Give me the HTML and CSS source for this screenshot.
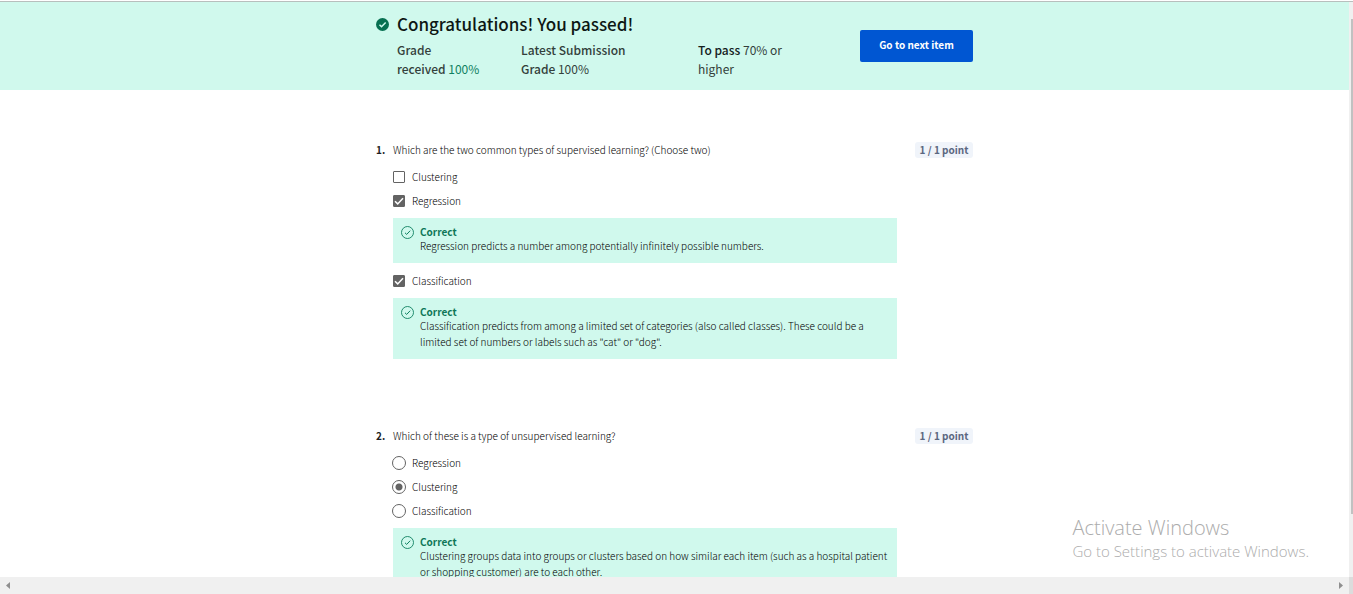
FILE: index.html
```html
<!DOCTYPE html>
<html lang="en">
<head>
<meta charset="utf-8">
<meta name="viewport" content="width=device-width, initial-scale=1">
<title>Practice quiz results</title>
<link rel="stylesheet" href="styles.css">
</head>
<body>
<svg class="sprite" aria-hidden="true">
  <symbol id="correct" viewBox="0 0 13 13"><circle cx="6.5" cy="6.5" r="6" fill="none" stroke="currentColor" stroke-width="0.9"/><path d="M4 6.8 5.7 8.4 9.2 4.7" fill="none" stroke="currentColor" stroke-width="1"/></symbol>
</svg>
<div class="viewport">
  <div class="page">
    <header class="banner">
      <div class="banner-inner">
        <svg class="passed-icon" viewBox="0 0 12 12" aria-hidden="true"><circle cx="6" cy="6" r="6" fill="#087051"/><path d="M3.2 6.2 5.1 8 8.9 4.2" fill="none" stroke="#d0f9ed" stroke-width="1.4"/></svg>
        <div class="result">
          <h1>Congratulations! You passed!</h1>
          <div class="stats">
            <p><strong>Grade<br>received</strong> <span class="grade">100%</span></p>
            <p><strong>Latest Submission<br>Grade</strong> 100%</p>
            <p><strong class="dark">To pass</strong> 70% or<br>higher</p>
          </div>
        </div>
        <button class="next" type="button">Go to next item</button>
      </div>
    </header>
    <main class="quiz">
      <section class="question">
        <span class="number">1.</span>
        <div class="body">
          <p class="prompt">Which are the two common types of supervised learning? (Choose two)</p>
          <label class="option"><input type="checkbox">Clustering</label>
          <label class="option"><input type="checkbox" checked>Regression</label>
          <div class="feedback">
            <svg aria-hidden="true"><use href="#correct"/></svg>
            <div><h2>Correct</h2><p>Regression predicts a number among potentially infinitely possible numbers.</p></div>
          </div>
          <label class="option"><input type="checkbox" checked>Classification</label>
          <div class="feedback">
            <svg aria-hidden="true"><use href="#correct"/></svg>
            <div><h2>Correct</h2><p>Classification predicts from among a limited set of categories (also called classes). These could be a limited set of numbers or labels such as "cat" or "dog".</p></div>
          </div>
        </div>
        <span class="points">1 / 1 point</span>
      </section>
      <section class="question">
        <span class="number">2.</span>
        <div class="body">
          <p class="prompt">Which of these is a type of unsupervised learning?</p>
          <label class="option"><input type="radio" name="q2">Regression</label>
          <label class="option"><input type="radio" name="q2" checked>Clustering</label>
          <label class="option"><input type="radio" name="q2">Classification</label>
          <div class="feedback">
            <svg aria-hidden="true"><use href="#correct"/></svg>
            <div><h2>Correct</h2><p>Clustering groups data into groups or clusters based on how similar each item (such as a hospital patient or shopping customer) are to each other.</p></div>
          </div>
        </div>
        <span class="points">1 / 1 point</span>
      </section>
    </main>
  </div>
  <div class="vbar"><div class="thumb"></div></div>
  <div class="hbar">
    <svg viewBox="0 0 4 7" aria-hidden="true"><path d="M4 0v7L0 3.5z"/></svg>
    <svg viewBox="0 0 4 7" aria-hidden="true"><path d="M0 0v7l4-3.500z"/></svg>
  </div>
  <div class="corner"></div>
</div>
<aside class="activation">
  <p class="activation-title">Activate Windows</p>
  <p>Go to Settings to activate Windows.</p>
</aside>
</body>
</html>
```
FILE: styles.css
```css
* { box-sizing: border-box; }
body, h1, h2, p { margin: 0; }
body {
  position: relative;
  background: #fff;
  color: #000;
  font: 300 10px/16px "Noto Sans CJK SC", "Open Sans", sans-serif;
}
.sprite { position: absolute; width: 0; height: 0; }

.viewport {
  display: grid;
  grid-template: minmax(0, 1fr) 17px / minmax(0, 1fr) 4px;
  height: 100vh;
  padding-top: 1px;
  overflow: hidden;
}
.viewport > * { min-height: 0; }
.page { overflow: hidden; border-top: 1px solid #b8bfbd; }

.banner { background: #d0f9ed; padding: 11px 16px 12px; }
.banner-inner {
  display: grid;
  grid-template-columns: 13px 1fr 113px;
  column-gap: 8px;
  max-width: 597px;
  margin: 0 auto;
}
.passed-icon { width: 13px; height: 13px; margin-top: 5px; }
h1 { font-size: 17px; line-height: 22px; font-weight: 500; color: #0d1714; margin-bottom: 5px; }
.stats {
  display: grid;
  grid-template-columns: 124px 177px 1fr;
  font-size: 12px;
  line-height: 19px;
  font-weight: 400;
  color: #333f3b;
}
.stats strong { font-weight: 500; }
.stats .dark { color: #14201c; }
.stats .grade { color: #0f8060; }
.next {
  align-self: start;
  height: 32px;
  margin-top: 17px;
  padding: 0 0 2px;
  border: 0;
  border-radius: 2px;
  background: #0056d2;
  color: #fff;
  font: 700 10px/16px "Noto Sans CJK SC", "Open Sans", sans-serif;
}

.quiz {
  display: grid;
  gap: 63px;
  max-width: 597px;
  margin: 0 auto;
  padding-top: 52px;
}
.question {
  display: grid;
  grid-template-columns: 17px minmax(0, 1fr) 58px;
  align-items: start;
}
.number { font-weight: 700; color: #1f1f1f; }
.body { padding-right: 18px; }
.prompt { margin-bottom: 7px; }
.option { display: flex; align-items: center; gap: 6px; height: 24px; }
.option input {
  appearance: none;
  flex: none;
  margin: 0;
  border: 1px solid #636363;
}
.option input[type="checkbox"] {
  width: 12px;
  height: 12px;
  margin-right: 1px;
  border-radius: 1px;
}
.option input[type="checkbox"]:checked {
  background: #636363 url("data:image/svg+xml,%3Csvg xmlns='http://www.w3.org/2000/svg' viewBox='0 0 10 10'%3E%3Cpath d='M1 5.200 3.700 7.900 9 2.300' fill='none' stroke='white' stroke-width='1.500'/%3E%3C/svg%3E") center / 10px 10px no-repeat;
}
.option input[type="radio"] {
  width: 14px;
  height: 14px;
  margin-left: -1px;
  border-radius: 50%;
}
.option input[type="radio"]:checked {
  background: radial-gradient(circle, #636363 3px, transparent 4px);
}
.feedback {
  display: grid;
  grid-template-columns: 13px 1fr;
  column-gap: 6px;
  margin: 5px 0 6px;
  padding: 8px 2px 9px 8px;
  background: #d0f9ed;
}
.feedback svg { width: 13px; height: 13px; color: #0f8060; }
.feedback h2 { font-size: 10px; line-height: 12px; font-weight: 700; color: #0f7758; }
.points {
  border-radius: 3px;
  background: #f0f4fa;
  color: #5b6780;
  font-weight: 700;
  text-align: center;
}

.vbar { padding: 17px 0 63px 2px; background: #f0f0f0; border-top: 1px solid #b8bfbd; }
.thumb { height: 100%; background: #c1c1c1; }
.hbar {
  display: flex;
  align-items: center;
  justify-content: space-between;
  padding: 0 6px;
  background: #f0f0f0;
  fill: #8f8f8f;
}
.hbar svg { width: 4px; height: 7px; }
.corner { background: #dcdcdc; }

.activation {
  position: absolute;
  right: 44px;
  bottom: 33px;
  color: #acacac;
  font: 300 15px/20px "Open Sans", "Noto Sans", sans-serif;
}
.activation-title { font-size: 20px; line-height: 26px; }
```
